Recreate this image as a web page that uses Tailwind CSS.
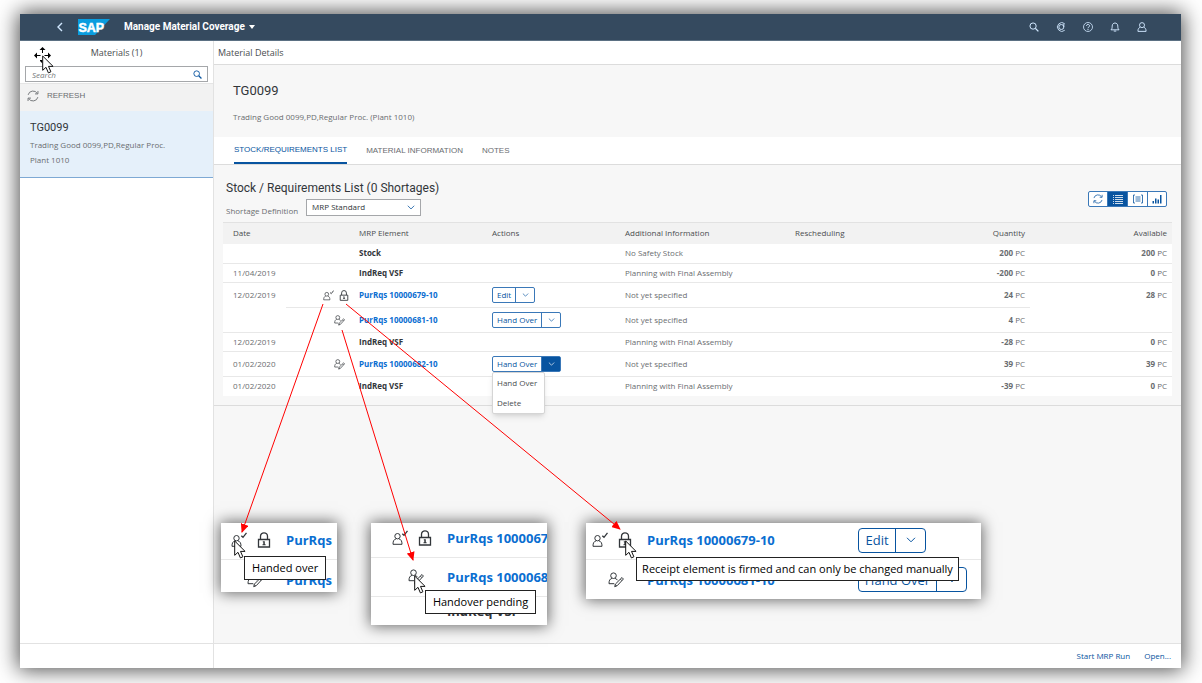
<!DOCTYPE html>
<html lang="en">
<head>
<meta charset="utf-8">
<meta name="viewport" content="width=device-width, initial-scale=1">
<title>Manage Material Coverage</title>
<script src="https://cdn.jsdelivr.net/npm/@tailwindcss/browser@4"></script>
</head>
<body class="bg-white">
<svg class="hidden" aria-hidden="true">
  <symbol id="search" viewBox="0 0 16 16"><g fill="none" stroke="currentColor" stroke-width="1.6"><circle cx="6.5" cy="6.5" r="5"/><path d="M10.2 10.2 15 15" stroke-width="2.2"/></g></symbol>
  <symbol id="refresh" viewBox="0 0 16 16"><g fill="none" stroke="currentColor" stroke-width="1.2"><path d="M1.5 6.5A6.7 6.7 0 0 1 13.8 4.7M14.5 9.5A6.7 6.7 0 0 1 2.2 11.3"/><path d="M14.6 1.3V5.2H10.7M1.4 14.7V10.8H5.3"/></g></symbol>
  <symbol id="chevron" viewBox="0 0 10 6"><path d="M1 .8 5 4.8 9 .8" fill="none" stroke="currentColor" stroke-width="1"/></symbol>
  <symbol id="user-check" viewBox="0 0 16 16"><g fill="none" stroke="currentColor" stroke-width="1"><circle cx="5.5" cy="6.2" r="2.7"/><path d="M3.9 9C1.8 9.6 1 11 1 14.3H10C10 11 9.2 9.6 7.1 9"/><path d="M10.3 3.7 12 5.3 15.5 .8" stroke-width="1.3"/></g></symbol>
  <symbol id="user-edit" viewBox="0 0 16 16"><g fill="none" stroke="currentColor" stroke-width="1"><circle cx="5.5" cy="3.7" r="2.8"/><path d="M3.9 6.4C1.8 7 1 8.5 1 11.7H6.3M7.1 6.4C8.2 6.7 9 7.3 9.4 8.2"/><path d="M14 5.5 15.4 7 9.2 13.7 6.7 14.7 7.4 12.1ZM12.4 7.2 13.8 8.6M8.5 14 7.3 12.6"/></g></symbol>
  <symbol id="lock" viewBox="0 0 14 16"><g fill="none" stroke="currentColor" stroke-width="1.3"><path d="M1.5 7.5H12.5V15H1.5ZM3.5 7.3V4.3A3.5 3.5 0 0 1 10.5 4.3V7.3"/></g><path d="M5.8 9.3H7.8V12.3H8.6V13.2H5.5V12.3H6.3V10.2H5.8Z" fill="currentColor"/></symbol>
  <symbol id="pointer" viewBox="0 0 12 19"><path d="M.7 1V15.3L4 12.3 6.4 17.9 8.9 16.8 6.5 11.4H11.1Z" fill="#fff" stroke="#111" stroke-width="1"/></symbol>
</svg>

<div class="relative flex min-h-screen flex-col pt-3.5 pr-[21px] pb-[15px] pl-5 font-['Open_Sans',sans-serif] text-[8px] leading-3 text-[#6a6d70]">
  <div class="flex grow flex-col bg-[#f7f7f7] shadow-[0_0_20px_2px_rgba(0,0,0,0.7)]">

    <header class="flex h-[27px] items-center border-b border-[#5b7083] bg-[#354a5f] pr-[34px] pl-9 text-[#d1e8ff]">
      <button type="button" aria-label="Back" class="flex h-4 w-[22px] items-center">
        <svg class="h-2.5 w-2" viewBox="0 0 8 10" fill="none" stroke="currentColor" stroke-width="1.4"><path d="M6 1 2 5 6 9"/></svg>
      </button>
      <svg class="h-4 w-8" viewBox="0 0 32 16" role="img" aria-label="SAP">
        <path d="M0 0H32L17 16H0Z" fill="#0a9ddf"/>
        <text x="0.5" y="12.7" fill="#fff" font-family="Liberation Sans, sans-serif" font-size="12.5" font-weight="700" stroke="#fff" stroke-width=".5">SAP</text>
      </svg>
      <button type="button" class="ml-3.5 flex items-center gap-1 font-[Roboto,sans-serif] text-[10px] font-bold text-white">Manage Material Coverage
        <svg class="h-1 w-1.5" viewBox="0 0 6 4"><path d="M0 0H6L3 4Z" fill="currentColor"/></svg>
      </button>
      <div class="ml-auto flex items-center gap-[17px]">
        <button type="button" aria-label="Search"><svg class="size-2.5"><use href="#search"/></svg></button>
        <button type="button" aria-label="CoPilot"><svg class="size-2.5" viewBox="0 0 16 16" fill="none" stroke="currentColor"><path d="M14 2.8A7 7 0 1 0 14 13.2" stroke-width="1.4"/><path d="M8.5 4A4 4 0 1 0 12.5 8V3" stroke-width="1.5"/><path d="M8.5 4A4 4 0 0 1 12.5 8" stroke-width="1.5"/></svg></button>
        <button type="button" aria-label="Help"><svg class="size-2.5" viewBox="0 0 16 16" fill="none" stroke="currentColor"><circle cx="8" cy="8" r="7.2" stroke-width="1.3"/><path d="M5.5 6.3C5.5 3.2 10.5 3.2 10.5 6.2 10.5 8 8 7.9 8 10M8 11.2V13" stroke-width="1.6"/></svg></button>
        <button type="button" aria-label="Notifications"><svg class="size-2.5" viewBox="0 0 16 16" fill="none" stroke="currentColor" stroke-width="1.5"><path d="M1.5 12.5C3.5 11 3.5 9 3.5 6.5 3.5 0 12.5 0 12.5 6.5 12.5 9 12.5 11 14.5 12.5ZM6 14.5H10"/></svg></button>
        <button type="button" aria-label="Profile"><svg class="size-2.5" viewBox="0 0 16 16" fill="none" stroke="currentColor" stroke-width="1.5"><circle cx="8" cy="5" r="4"/><path d="M5 8.5C2.5 9.5 1.5 11 1.5 15H14.5C14.5 11 13.5 9.5 11 8.5"/></svg></button>
      </div>
    </header>

    <div class="flex grow">
      <aside class="flex w-[194px] shrink-0 flex-col border-r border-[#e2e2e2] bg-white">
        <h2 class="flex h-[25px] items-center justify-center pb-0.5 text-[9px] text-[#4a4d50]">Materials (1)</h2>
        <form class="mx-[5px] mb-px flex h-4 items-center border border-[#a5a7aa] bg-white">
          <input type="search" aria-label="Search materials" placeholder="Search" class="h-3.5 min-w-0 grow px-1.5 text-[8px] outline-none placeholder:text-[#74777a] placeholder:italic">
          <button type="button" aria-label="Search" class="pr-[5px] text-[#0854a0]"><svg class="size-[9px]"><use href="#search"/></svg></button>
        </form>
        <button type="button" class="flex h-7 items-center gap-2 border-t border-[#e5e5e5] bg-[#f2f2f2] pb-1 pl-[7px] font-['Liberation_Sans',sans-serif]">
          <svg class="size-3"><use href="#refresh"/></svg>REFRESH
        </button>
        <a href="#" class="flex flex-col border-b border-[#7ea9d4] bg-[#e5f0fa] px-2.5 pt-2 pb-2.5">
          <span class="font-[Roboto,sans-serif] text-[11px] leading-[18px] text-[#32363a]">TG0099</span>
          <span class="leading-[15px]">Trading Good 0099,PD,Regular Proc.</span>
          <span class="leading-[15px]">Plant 1010</span>
        </a>
        <div class="mt-auto h-[25px] border-t border-[#e2e2e2]"></div>
      </aside>

      <main class="flex min-w-0 grow flex-col">
        <h1 class="flex h-6 items-center border-b border-[#dcdcdc] bg-white pl-1 text-[9px] text-[#4a4d50]">Material Details</h1>
        <section class="flex flex-col gap-2.5 px-[19px] pt-4 pb-3.5">
          <h2 class="font-[Roboto,sans-serif] text-[13px] leading-5 text-[#32363a]">TG0099</h2>
          <p>Trading Good 0099,PD,Regular Proc. (Plant 1010)</p>
        </section>
        <nav class="flex h-7 gap-[19px] border-b border-[#dcdcdc] bg-white pl-5 font-['Liberation_Sans',sans-serif]">
          <a href="#" class="flex items-center border-b-2 border-[#0854a0] text-[#0854a0]">STOCK/REQUIREMENTS LIST</a>
          <a href="#" class="flex items-center">MATERIAL INFORMATION</a>
          <a href="#" class="flex items-center">NOTES</a>
        </nav>

        <section class="border-b border-[#dcdcdc] px-[9px] pt-3.5 pb-[9px]">
          <div class="flex items-start justify-between pr-[5px] pl-[3px]">
            <div>
              <h2 class="font-[Roboto,sans-serif] text-xs leading-[18px] text-[#32363a]">Stock / Requirements List (0 Shortages)</h2>
              <div class="mb-[5px] flex items-center gap-2">
                <label for="shortage" class="pt-2">Shortage Definition</label>
                <div class="relative text-[#32363a]">
                  <select id="shortage" class="block h-[17px] w-[115px] appearance-none border border-[#a5a7aa] bg-white px-[5px] leading-3"><option>MRP Standard</option></select>
                  <svg class="pointer-events-none absolute top-1.5 right-1.5 h-[5px] w-2 text-[#0854a0]"><use href="#chevron"/></svg>
                </div>
              </div>
            </div>
            <div class="mt-3 flex h-4 divide-x divide-[#3a78b8] overflow-hidden rounded-xs border border-[#3a78b8] bg-white text-[#0854a0]">
              <button type="button" aria-label="Refresh" class="flex w-[19px] items-center justify-center"><svg class="size-2.5"><use href="#refresh"/></svg></button>
              <button type="button" aria-label="List" class="flex w-5 items-center justify-center bg-[#0854a0] text-white/80"><svg class="size-2.5" viewBox="0 0 10 10" fill="none" stroke="currentColor" stroke-width="1"><path d="M0 1.5H1M0 3.5H1M0 5.5H1M0 7.5H1M0 9.5H1M2 1.5H10M2 3.5H10M2 5.5H10M2 7.5H10M2 9.5H10"/></svg></button>
              <button type="button" aria-label="Group" class="flex w-5 items-center justify-center"><svg class="size-2.5" viewBox="0 0 10 10" fill="none" stroke="currentColor" stroke-width=".8"><path d="M2 1H.5V9H2M8 1H9.5V9H8M2.5 3H7.5M2.5 5H7.5M2.5 7H7.5"/></svg></button>
              <button type="button" aria-label="Chart" class="flex w-[18px] items-center justify-center"><svg class="size-2.5" viewBox="0 0 10 10" fill="currentColor"><path d="M.5 7H2V9.5H.5ZM3 4.5H4.5V9.5H3ZM5.5 5.5H7V9.5H5.5ZM8 1H9.5V9.5H8Z"/></svg></button>
            </div>
          </div>

          <table class="w-full table-fixed border-collapse bg-white text-left">
            <colgroup>
              <col class="w-[63px]"><col class="w-[68px]"><col class="w-[133px]"><col class="w-[133px]"><col class="w-[170px]"><col><col class="w-[100px]"><col class="w-[142px]">
            </colgroup>
            <thead>
              <tr class="h-[21px] border-t border-[#e2e2e2] bg-[#f2f2f2] text-[#4a4d50] *:px-[5px] *:py-0 *:font-normal">
                <th scope="col"><span class="pl-[5px]">Date</span></th><th aria-label="Status"></th><th scope="col">MRP Element</th><th scope="col">Actions</th><th scope="col">Additional Information</th><th scope="col">Rescheduling</th><th scope="col" class="text-right">Quantity</th><th scope="col" class="text-right">Available</th>
              </tr>
            </thead>
            <tbody>
              <tr class="h-5 border-b border-[#e8e8e8] *:px-[5px] *:py-0">
                <td></td><td></td><td class="font-bold text-[#32363a]">Stock</td><td></td><td>No Safety Stock</td><td></td><td class="text-right"><b>200</b> PC</td><td class="text-right"><b>200</b> PC</td>
              </tr>
              <tr class="h-[19px] border-b border-[#e8e8e8] *:px-[5px] *:py-0">
                <td><span class="pl-[5px]">11/04/2019</span></td><td></td><td class="font-bold text-[#32363a]">IndReq VSF</td><td></td><td>Planning with Final Assembly</td><td></td><td class="text-right"><b>-200</b> PC</td><td class="text-right"><b>0</b> PC</td>
              </tr>
              <tr class="h-[25px] *:border-b *:border-[#e8e8e8] *:px-[5px] *:py-0">
                <td rowspan="2" class="align-top"><div class="pt-1.5 pl-[5px]">12/02/2019</div></td>
                <td><div class="flex justify-end gap-[5px] text-[#32363a]"><svg class="size-[11px]"><use href="#user-check"/></svg><svg class="h-[11px] w-2.5"><use href="#lock"/></svg></div></td>
                <td><a href="#" class="font-bold text-[#0a6ed1]">PurRqs 10000679-10</a></td>
                <td><div class="flex h-4 w-fit divide-x divide-[#3a78b8] rounded-xs border border-[#3a78b8] text-[#0854a0]"><button type="button" class="px-1">Edit</button><button type="button" aria-label="More actions" class="flex w-[18px] items-center justify-center"><svg class="h-1 w-[7px]"><use href="#chevron"/></svg></button></div></td>
                <td>Not yet specified</td><td></td><td class="text-right"><b>24</b> PC</td>
                <td rowspan="2" class="text-right align-top"><div class="pt-1.5"><b>28</b> PC</div></td>
              </tr>
              <tr class="h-[25px] border-b border-[#e8e8e8] *:px-[5px] *:py-0">
                <td><div class="flex justify-end pr-1 text-[#32363a]"><svg class="size-[11px]"><use href="#user-edit"/></svg></div></td>
                <td><a href="#" class="font-bold text-[#0a6ed1]">PurRqs 10000681-10</a></td>
                <td><div class="flex h-4 w-fit divide-x divide-[#3a78b8] rounded-xs border border-[#3a78b8] text-[#0854a0]"><button type="button" class="px-1">Hand Over</button><button type="button" aria-label="More actions" class="flex w-[18px] items-center justify-center"><svg class="h-1 w-[7px]"><use href="#chevron"/></svg></button></div></td>
                <td>Not yet specified</td><td></td><td class="text-right"><b>4</b> PC</td>
              </tr>
              <tr class="h-[19px] border-b border-[#e8e8e8] *:px-[5px] *:py-0">
                <td><span class="pl-[5px]">12/02/2019</span></td><td></td><td class="font-bold text-[#32363a]">IndReq VSF</td><td></td><td>Planning with Final Assembly</td><td></td><td class="text-right"><b>-28</b> PC</td><td class="text-right"><b>0</b> PC</td>
              </tr>
              <tr class="h-[25px] border-b border-[#e8e8e8] *:px-[5px] *:py-0">
                <td><span class="pl-[5px]">01/02/2020</span></td>
                <td><div class="flex justify-end pr-1 text-[#32363a]"><svg class="size-[11px]"><use href="#user-edit"/></svg></div></td>
                <td><a href="#" class="font-bold text-[#0a6ed1]">PurRqs 10000682-10</a></td>
                <td><div class="relative w-fit">
                  <div class="flex h-4 divide-x divide-[#3a78b8] rounded-xs border border-[#3a78b8] text-[#0854a0]"><button type="button" class="px-1">Hand Over</button><button type="button" aria-label="More actions" aria-expanded="true" class="flex w-[18px] items-center justify-center bg-[#0854a0] text-white"><svg class="h-1 w-[7px]"><use href="#chevron"/></svg></button></div>
                  <div class="absolute top-full left-0 z-10 flex w-[53px] flex-col items-start rounded-xs border border-[#d5d5d5] bg-white pl-1 leading-5 text-[#4a4d50] shadow-md"><button type="button">Hand Over</button><button type="button">Delete</button></div>
                </div></td>
                <td>Not yet specified</td><td></td><td class="text-right"><b>39</b> PC</td><td class="text-right"><b>39</b> PC</td>
              </tr>
              <tr class="h-[19px] *:px-[5px] *:py-0">
                <td><span class="pl-[5px]">01/02/2020</span></td><td></td><td class="font-bold text-[#32363a]">IndReq VSF</td><td></td><td>Planning with Final Assembly</td><td></td><td class="text-right"><b>-39</b> PC</td><td class="text-right"><b>0</b> PC</td>
              </tr>
            </tbody>
          </table>
        </section>

        <footer class="mt-auto flex h-[25px] items-center justify-end gap-3.5 border-t border-[#e2e2e2] bg-white pr-2.5 text-[#0854a0]">
          <button type="button">Start MRP Run</button><button type="button">Open...</button>
        </footer>
      </main>
    </div>
  </div>

  <!-- Enlarged callouts -->
  <figure class="absolute top-[523px] left-[221px] h-[69px] w-[116px] bg-white text-[13px] font-bold text-[#0a6ed1] shadow-[0_0_14px_1px_rgba(0,0,0,0.6)]">
    <div class="flex h-full flex-col overflow-hidden whitespace-nowrap">
      <div class="flex h-[37px] shrink-0 items-center gap-[15px] border-b border-[#e8e8e8] pb-0.5 pl-2.5"><div class="flex w-10 shrink-0 justify-between text-[#32363a]"><svg class="size-4"><use href="#user-check"/></svg><svg class="h-4 w-3.5"><use href="#lock"/></svg></div>PurRqs</div>
      <div class="flex h-[39px] shrink-0 items-center gap-[15px] pl-2.5"><div class="flex w-10 shrink-0 justify-end pr-2 text-[#32363a]"><svg class="size-4"><use href="#user-edit"/></svg></div>PurRqs</div>
    </div>
  </figure>
  <figure class="absolute top-[523px] left-[371px] h-[102px] w-44 bg-white text-[13px] font-bold text-[#0a6ed1] shadow-[0_0_14px_1px_rgba(0,0,0,0.6)]">
    <div class="flex h-full flex-col overflow-hidden whitespace-nowrap">
      <div class="flex h-[35px] shrink-0 items-center gap-[15px] border-b border-[#e8e8e8] pb-1 pl-[21px]"><div class="flex w-10 shrink-0 justify-between text-[#32363a]"><svg class="size-4"><use href="#user-check"/></svg><svg class="h-4 w-3.5"><use href="#lock"/></svg></div>PurRqs 10000679-10</div>
      <div class="flex h-[39px] shrink-0 items-center gap-[15px] border-b border-[#e8e8e8] pl-[21px]"><div class="flex w-10 shrink-0 justify-end pr-2 text-[#32363a]"><svg class="size-4"><use href="#user-edit"/></svg></div>PurRqs 10000681-10</div>
      <div class="flex h-7 shrink-0 items-center pl-[76px] text-[#32363a]">IndReq VSF</div>
    </div>
  </figure>
  <figure class="absolute top-[523px] left-[586px] h-[76px] w-[395px] bg-white text-[13px] font-bold text-[#0a6ed1] shadow-[0_0_14px_1px_rgba(0,0,0,0.6)]">
    <div class="flex h-full flex-col overflow-hidden whitespace-nowrap">
      <div class="flex h-[37px] shrink-0 items-center gap-[15px] border-b border-[#e8e8e8] pb-0.5 pl-1.5"><div class="flex w-10 shrink-0 justify-between text-[#32363a]"><svg class="size-4"><use href="#user-check"/></svg><svg class="h-4 w-3.5"><use href="#lock"/></svg></div><span class="w-[196px]">PurRqs 10000679-10</span>
        <div class="flex h-[25px] divide-x divide-[#0854a0] rounded-sm border border-[#0854a0] font-normal text-[#0854a0]"><button type="button" class="w-[37px]">Edit</button><button type="button" aria-label="More actions" class="flex w-[29px] items-center justify-center"><svg class="h-1.5 w-2.5"><use href="#chevron"/></svg></button></div></div>
      <div class="flex h-[39px] shrink-0 items-center gap-[15px] pl-1.5"><div class="flex w-10 shrink-0 justify-end pr-2 text-[#32363a]"><svg class="size-4"><use href="#user-edit"/></svg></div><span class="w-[196px]">PurRqs 10000681-10</span>
        <div class="flex h-[25px] divide-x divide-[#0854a0] rounded-sm border border-[#0854a0] font-normal text-[#0854a0]"><button type="button" class="w-[78px]">Hand Over</button><button type="button" aria-label="More actions" class="flex w-[29px] items-center justify-center"><svg class="h-1.5 w-2.5"><use href="#chevron"/></svg></button></div></div>
    </div>
  </figure>

  <!-- Arrows from the list icons to the callouts -->
  <svg class="pointer-events-none absolute top-0 left-0 h-[683px] w-[1202px]" viewBox="0 0 1202 683" fill="none" stroke="#f00" stroke-width="1" aria-hidden="true">
    <defs><marker id="head" markerUnits="userSpaceOnUse" markerWidth="9" markerHeight="8" refX="8" refY="4" orient="auto"><path d="M0 0 9 4 0 8Z" fill="#f00" stroke="none"/></marker></defs>
    <path d="M323 304 242 532" marker-end="url(#head)"/><path d="M342 330 413 560" marker-end="url(#head)"/><path d="M346 304 620 529" marker-end="url(#head)"/>
  </svg>

  <!-- Pointers and their tooltips -->
  <div role="tooltip" class="absolute top-[556px] left-[244px] flex h-6 w-[82px] items-center justify-center border border-[#222] bg-white text-[11px] whitespace-nowrap text-black">Handed over</div>
  <div role="tooltip" class="absolute top-[590px] left-[425px] flex h-6 w-[111px] items-center justify-center border border-[#222] bg-white text-[11px] whitespace-nowrap text-black">Handover pending</div>
  <div role="tooltip" class="absolute top-[557px] left-[636px] flex h-6 w-[323px] items-center justify-center border border-[#222] bg-white text-[11px] whitespace-nowrap text-black">Receipt element is firmed and can only be changed manually</div>
  <svg class="absolute top-[540px] left-[234px] h-[19px] w-3"><use href="#pointer"/></svg>
  <svg class="absolute top-[575px] left-[414px] h-[19px] w-3"><use href="#pointer"/></svg>
  <svg class="absolute top-[540px] left-[625px] h-[19px] w-3"><use href="#pointer"/></svg>
  <svg class="absolute top-[47px] left-[34px] h-[17px] w-[17px]" viewBox="0 0 17 17" aria-hidden="true"><path d="M8.5 0 11.5 3H9V6H8V3H5.5ZM0 8.5 3 5.5V8H6.5V9H3V11.5ZM17 8.5 14 5.5V8H10.5V9H14V11.5ZM8 11V13H6V14L8.5 16.5Z" fill="#000"/></svg>
  <svg class="absolute top-[55px] left-[42px] h-[19px] w-3"><use href="#pointer"/></svg>
</div>
</body>
</html>
